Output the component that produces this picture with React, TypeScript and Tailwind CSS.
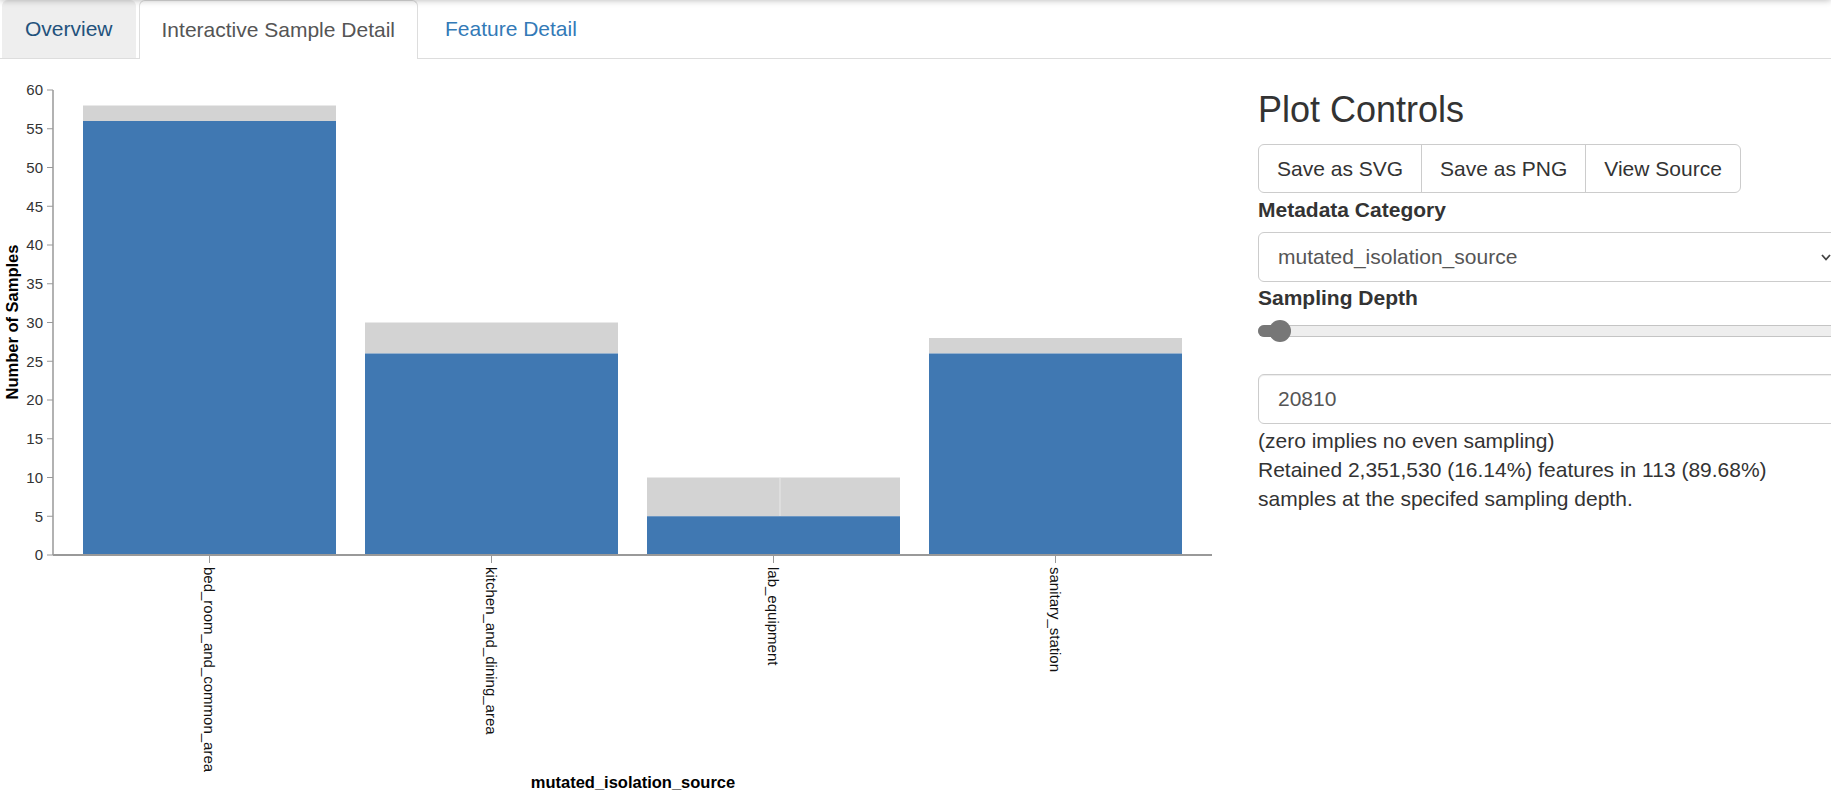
import React from "react";

type Bar = { label: string; blue: number; total: number };

const BARS: Bar[] = [
  { label: "bed_room_and_common_area", blue: 56, total: 58 },
  { label: "kitchen_and_dining_area", blue: 26, total: 30 },
  { label: "lab_equipment", blue: 5, total: 10 },
  { label: "sanitary_station", blue: 26, total: 28 },
];

const FONT = "'Liberation Sans', Arial, sans-serif";
const BASE = 555;
const PER_UNIT = 7.75;
const BAR_W = 253;
const STEP = 282;
const FIRST_X = 83;

function y(v: number) {
  return BASE - v * PER_UNIT;
}

function Chart() {
  const ticks = Array.from({ length: 13 }, (_, i) => i * 5);
  return (
    <svg width={1230} height={736} className="block shrink-0">
      <g transform="translate(0 -59)" fontFamily={FONT}>
        {BARS.map((b, i) => {
          const x = FIRST_X + i * STEP;
          const split = b.label === "lab_equipment";
          return (
            <g key={b.label}>
              <rect x={x} y={y(b.total)} width={BAR_W} height={y(b.blue) - y(b.total)} fill="#d3d3d3" />
              {split ? <line x1={x + 133} x2={x + 133} y1={y(b.total)} y2={y(b.blue)} stroke="#e8e8e8" strokeWidth={1} /> : null}
              <rect x={x} y={y(b.blue)} width={BAR_W} height={BASE - y(b.blue)} fill="#4078b2" />
            </g>
          );
        })}

        {/* y axis */}
        <line x1={53} x2={53} y1={90} y2={BASE} stroke="#999" strokeWidth={1.5} />
        {ticks.map((t) => (
          <g key={t}>
            <line x1={47} x2={53} y1={y(t)} y2={y(t)} stroke="#999" strokeWidth={1} />
            <text x={43} y={y(t)} dy="0.35em" textAnchor="end" fontSize={15} fill="#333">
              {t}
            </text>
          </g>
        ))}
        <text transform="translate(18 322) rotate(-90)" textAnchor="middle" fontSize={16.5} fontWeight="bold" fill="#000">
          Number of Samples
        </text>

        {/* x axis */}
        <line x1={53} x2={1212} y1={BASE} y2={BASE} stroke="#999" strokeWidth={2} />
        {BARS.map((b, i) => {
          const cx = FIRST_X + i * STEP + BAR_W / 2;
          return (
            <g key={b.label}>
              <line x1={cx} x2={cx} y1={BASE} y2={BASE + 8} stroke="#999" strokeWidth={1} />
              <text transform={`translate(${cx} ${BASE + 12}) rotate(90)`} dy="0.35em" fontSize={15} fill="#111">
                {b.label}
              </text>
            </g>
          );
        })}
        <text x={633} y={788} textAnchor="middle" fontSize={16.5} fontWeight="bold" fill="#000">
          mutated_isolation_source
        </text>
      </g>
    </svg>
  );
}

function Controls() {
  return (
    <div className="ml-[28px] w-[582px] shrink-0 text-[21px] text-[#333]">
      <h3 className="mt-[31px] text-[36px] leading-[40px] font-normal">Plot Controls</h3>

      <div className="mt-[14px] flex h-[49px] w-fit rounded-[6px] border border-[#ccc]">
        <button className="px-[18px] leading-[30px]">Save as SVG</button>
        <button className="border-l border-[#ccc] px-[18px] leading-[30px]">Save as PNG</button>
        <button className="border-l border-[#ccc] px-[18px] leading-[30px]">View Source</button>
      </div>

      <div className="mt-[2px] font-bold leading-[30px]">Metadata Category</div>
      <div className="mt-[7px] flex h-[50px] items-center justify-between rounded-[6px] border border-[#ccc] pl-[19px] pr-[8px] text-[#555]">
        <span>mutated_isolation_source</span>
        <svg width="10" height="7" viewBox="0 0 10 7">
          <path d="M1 1 L5 5.5 L9 1" fill="none" stroke="#444" strokeWidth="1.8" />
        </svg>
      </div>

      <div className="mt-px font-bold leading-[30px]">Sampling Depth</div>
      <div className="relative mt-[7px] h-[22px]">
        <div className="absolute left-0 right-0 top-[5px] h-[12px] rounded-[6px] border border-[#c4c4c4] bg-[#eee]" />
        <div className="absolute left-0 top-[5px] h-[12px] w-[24px] rounded-l-[6px] bg-[#777]" />
        <div className="absolute left-[11px] top-0 h-[22px] w-[22px] rounded-full bg-[#777]" />
      </div>

      <div className="mt-[32px] flex h-[50px] items-center rounded-[6px] border border-[#ccc] pl-[19px] text-[#555] shadow-[inset_0_1px_1px_rgba(0,0,0,0.075)]">
        20810
      </div>
      <div className="mt-[2px] leading-[29px]">
        <div>(zero implies no even sampling)</div>
        <div>
          Retained 2,351,530 (16.14%) features in 113 (89.68%)
          <br />
          samples at the specifed sampling depth.
        </div>
      </div>
    </div>
  );
}

export default function App() {
  return (
    <div
      className="relative h-[795px] w-[1831px] overflow-hidden bg-white text-[#333]"
      style={{ fontFamily: FONT }}
    >
      <div className="pointer-events-none absolute left-0 right-0 top-[-10px] h-[10px] shadow-[0_0_7px_rgba(0,0,0,0.3)]" />

      <nav className="flex h-[59px] border-b border-[#ddd] text-[21px]">
        <div className="ml-[2px] flex h-[58px] items-center rounded-t-[6px] bg-[#eee] px-[23px] text-[#23527c]">
          Overview
        </div>
        <div className="ml-[3px] flex h-[59px] items-center rounded-t-[6px] border-x border-t border-[#ddd] bg-white px-[22px] text-[#555]">
          Interactive Sample Detail
        </div>
        <div className="ml-[3px] flex h-[58px] items-center pl-[24px] text-[#337ab7]">Feature Detail</div>
      </nav>

      <div className="flex">
        <Chart />
        <Controls />
      </div>
    </div>
  );
}
